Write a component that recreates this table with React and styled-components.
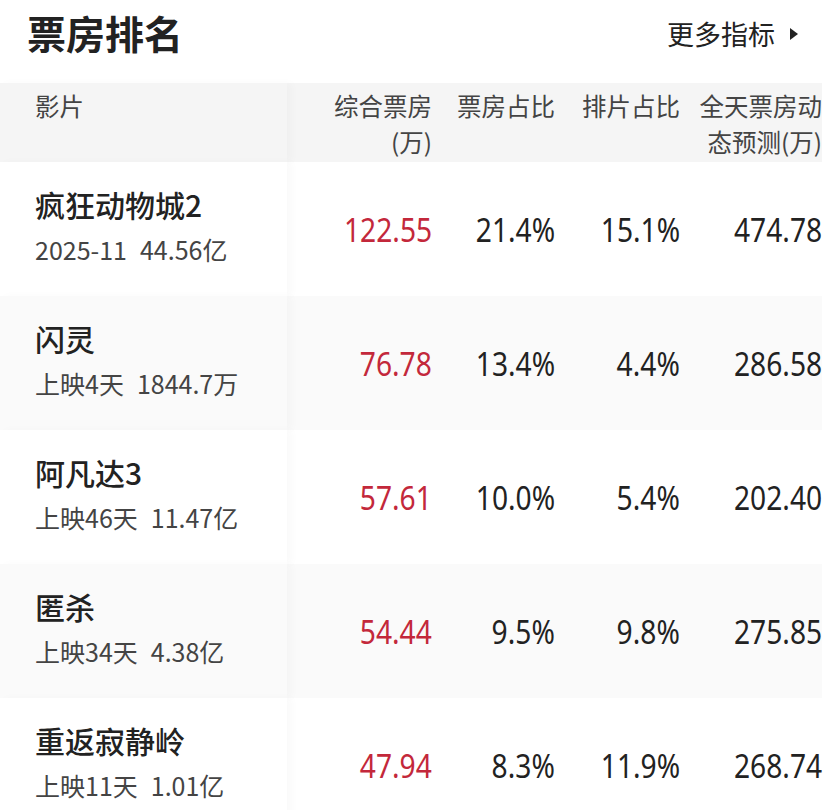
import React from "react";
import styled, { createGlobalStyle } from "styled-components";

const GlobalStyle = createGlobalStyle`
  body {
    margin: 0;
    background: #fff;
    font-family: "Noto Sans CJK SC", "Noto Sans", sans-serif;
    color: #222;
  }
`;

const Page = styled.div`
  width: 830px;
  height: 810px;
  overflow: hidden;
`;

const TitleBar = styled.div`
  height: 83px;
  display: flex;
  align-items: flex-start;
  justify-content: space-between;
  padding: 0 32px 0 27px;
  box-sizing: border-box;
`;

const Title = styled.h1`
  margin: 6px 0 0;
  font-size: 39px;
  font-weight: 700;
  line-height: 52px;
  color: #222;
`;

const MoreLink = styled.div`
  margin-top: 15px;
  font-size: 27px;
  line-height: 38px;
  color: #222;
  display: flex;
  align-items: center;
  gap: 15px;
`;

const Table = styled.div`
  display: grid;
  grid-template-columns: 287px 145px 123px 125px 142px;
`;

const Row = styled.div`
  display: contents;
`;

const HeadCell = styled.div`
  background: #f5f5f5;
  height: 79px;
  box-sizing: border-box;
  padding-top: 5px;
  font-size: 24.5px;
  line-height: 35px;
  color: #444;
  white-space: nowrap;
  text-align: ${(p) => (p.$left ? "left" : "right")};
  padding-left: ${(p) => (p.$left ? "35px" : "0")};
  position: relative;
  z-index: ${(p) => (p.$left ? 1 : 0)};
  box-shadow: ${(p) => (p.$left ? "5px 0 8px rgba(0, 0, 0, 0.025)" : "none")};
`;

const HeadLine = styled.div`
  height: 36px;
  line-height: 36px;
`;

const NameCell = styled.div`
  background: ${(p) => (p.$alt ? "#fafafa" : "#fff")};
  height: 134px;
  box-sizing: border-box;
  padding-left: 35px;
  padding-bottom: 8px;
  display: flex;
  flex-direction: column;
  justify-content: center;
  position: relative;
  z-index: 1;
  box-shadow: 5px 0 8px rgba(0, 0, 0, 0.025);
`;

const Name = styled.div`
  font-size: 30px;
  font-weight: 500;
  line-height: 40px;
  color: #222;
`;

const Sub = styled.div`
  font-size: 25px;
  line-height: 34px;
  color: #444;
  margin-top: 8px;
  display: flex;
  gap: 13px;
`;

const NumCell = styled.div`
  background: ${(p) => (p.$alt ? "#fafafa" : "#fff")};
  height: 134px;
  display: flex;
  align-items: center;
  justify-content: flex-end;
  font-family: "Noto Sans", "Roboto", sans-serif;
  font-size: 32px;
  color: ${(p) => (p.$red ? "#c3283b" : "#222")};
`;

/* the app's digit face is narrower than anything installed */
const Narrow = styled.span`
  display: inline-block;
  transform: scaleX(0.88);
  transform-origin: right center;
`;

const Arrow = () => (
  <svg width="8" height="12" viewBox="0 0 8 12">
    <path d="M0 0 L8 6 L0 12 Z" fill="#222" />
  </svg>
);

const films = [
  { name: "疯狂动物城2", when: "2025-11", total: "44.56亿", box: "122.55", share: "21.4%", seat: "15.1%", pred: "474.78" },
  { name: "闪灵", when: "上映4天", total: "1844.7万", box: "76.78", share: "13.4%", seat: "4.4%", pred: "286.58" },
  { name: "阿凡达3", when: "上映46天", total: "11.47亿", box: "57.61", share: "10.0%", seat: "5.4%", pred: "202.40" },
  { name: "匿杀", when: "上映34天", total: "4.38亿", box: "54.44", share: "9.5%", seat: "9.8%", pred: "275.85" },
  { name: "重返寂静岭", when: "上映11天", total: "1.01亿", box: "47.94", share: "8.3%", seat: "11.9%", pred: "268.74" },
];

export default function App() {
  return (
    <Page>
      <GlobalStyle />
      <TitleBar>
        <Title>票房排名</Title>
        <MoreLink>
          更多指标 <Arrow />
        </MoreLink>
      </TitleBar>
      <Table>
        <Row>
          <HeadCell $left>影片</HeadCell>
          <HeadCell>
            <HeadLine>综合票房</HeadLine>
            <HeadLine>(万)</HeadLine>
          </HeadCell>
          <HeadCell>票房占比</HeadCell>
          <HeadCell>排片占比</HeadCell>
          <HeadCell>
            <HeadLine>全天票房动</HeadLine>
            <HeadLine>态预测(万)</HeadLine>
          </HeadCell>
        </Row>
        {films.map((f, i) => {
          const alt = i % 2 === 1;
          return (
            <Row key={f.name}>
              <NameCell $alt={alt}>
                <Name>{f.name}</Name>
                <Sub>
                  <span>{f.when}</span>
                  <span>{f.total}</span>
                </Sub>
              </NameCell>
              <NumCell $alt={alt} $red><Narrow>{f.box}</Narrow></NumCell>
              <NumCell $alt={alt}><Narrow>{f.share}</Narrow></NumCell>
              <NumCell $alt={alt}><Narrow>{f.seat}</Narrow></NumCell>
              <NumCell $alt={alt}><Narrow>{f.pred}</Narrow></NumCell>
            </Row>
          );
        })}
      </Table>
    </Page>
  );
}
